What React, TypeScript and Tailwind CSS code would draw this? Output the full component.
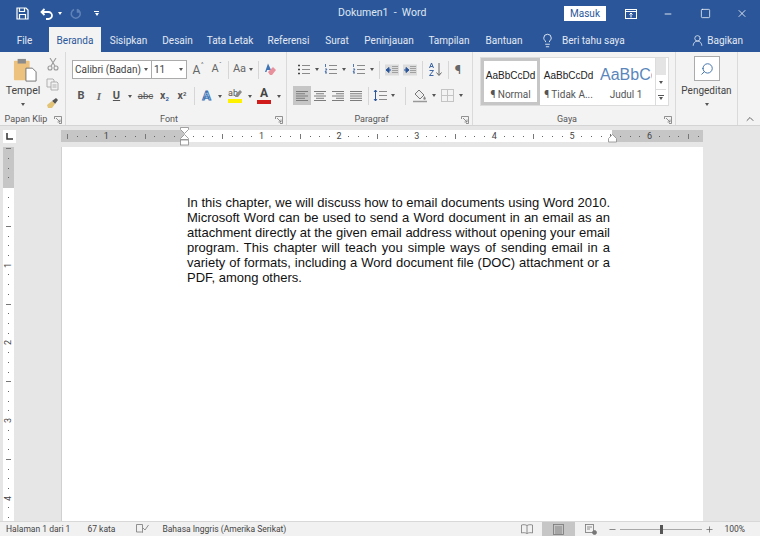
import type { ReactNode } from "react"
import { ChevronUp, Lightbulb, Minus, Plus, Search, Square, UserRound, X } from "lucide-react"

const tabs = [
  { label: "Sisipkan", w: "w-[53px]" },
  { label: "Desain", w: "w-[45px]" },
  { label: "Tata Letak", w: "w-[60px]" },
  { label: "Referensi", w: "w-[57px]" },
  { label: "Surat", w: "w-[40px]" },
  { label: "Peninjauan", w: "w-[64px]" },
  { label: "Tampilan", w: "w-[56px]" },
  { label: "Bantuan", w: "w-[54px]" },
]

function Caret({ className = "" }: { className?: string }) {
  return <span className={"inline-block w-0 h-0 border-x-[2.5px] border-x-transparent border-t-[3px] border-t-[#555] " + className} />
}

function Launcher() {
  return (
    <svg width="8" height="8" viewBox="0 0 8 8" fill="none" stroke="#777" strokeWidth="0.8">
      <path d="M0.5 3V0.5H7.5V7.5H5M2 2l4 4M6 3.5V6H3.5" />
    </svg>
  )
}

function Sep() {
  return <div className="w-px h-[18px] bg-[#d6d6d6]" />
}

function Lines({ widths, x = 1 }: { widths: number[]; x?: number }) {
  return (
    <svg width="14" height="12" viewBox="0 0 14 12" stroke="#7c7c7c" strokeWidth="1">
      {widths.map((w, i) => (
        <path key={i} d={"M" + (x === 1 ? 1 : x === 2 ? (14 - w) / 2 : 13 - w) + " " + (1.5 + i * 2.25) + "h" + w} />
      ))}
    </svg>
  )
}

function ListIcon({ num }: { num?: boolean }) {
  return (
    <svg width="13" height="13" viewBox="0 0 13 13" stroke="#8a8a8a" strokeWidth="1">
      <path d="M5 2.5h8M5 6.5h8M5 10.5h8" />
      {num ? (
        <path d="M1.5 1v3M1 6h2L1 9h2M1 10h2" stroke="#2b579a" strokeWidth="0.8" fill="none" />
      ) : (
        <path d="M1 2.5h2M1 6.5h2M1 10.5h2" stroke="#444" strokeWidth="1.6" />
      )}
    </svg>
  )
}

function Indent({ flip }: { flip?: boolean }) {
  return (
    <svg width="14" height="12" viewBox="0 0 14 12">
      <rect x="0" y="0.5" width="14" height="11" fill="#dcdcdc" />
      <path d="M7 2.5h6M7 4.5h6M7 6.5h6M7 8.5h6" stroke="#a0a0a0" />
      <path d={flip ? "M1 6h3M3 3.5l3 2.5-3 2.5z" : "M3 6h3M4 3.5L1 6l3 2.5z"} stroke="#2b579a" fill="#2b579a" />
    </svg>
  )
}

function GroupLabel({ label, className = "" }: { label: string; className?: string }) {
  return (
    <div className={"absolute left-0 right-0 bottom-0 h-[11px] flex items-center justify-center " + className}>
      <span className="text-[9px] leading-[11px] text-[#555] whitespace-nowrap">{label}</span>
      <span className="absolute right-[3px] top-[2px]">
        <Launcher />
      </span>
    </div>
  )
}

function Cell({ w, children, className = "" }: { w: string; children: ReactNode; className?: string }) {
  return <div className={"flex items-center justify-center shrink-0 " + w + " " + className}>{children}</div>
}

function PapanKlip() {
  return (
    <div className="relative w-[66px] h-full border-r border-[#dadada] shrink-0">
      <div className="flex pt-[5px]">
        <div className="w-[46px] flex flex-col items-center">
          <svg width="24" height="26" viewBox="0 0 26 26" className="ml-[4px]">
            <rect x="1" y="3" width="17" height="21" rx="1" fill="#edc27e" />
            <rect x="5" y="1" width="9" height="5" fill="#8c8c8c" />
            <path d="M14 11h7l4 4v10H14z" fill="#fff" stroke="#707070" />
          </svg>
          <span className="text-[10.5px] leading-[14px] text-[#444] mt-[1px]">Tempel</span>
          <Caret className="mt-[5px]" />
        </div>
        <div className="flex flex-col items-center gap-[7px] pt-[1px]">
          <svg width="12" height="13" viewBox="0 0 12 13" fill="none" stroke="#9a9a9a" strokeWidth="1.1">
            <path d="M3 0l5 8M9 0L4 8" />
            <circle cx="3" cy="10" r="2" />
            <circle cx="9" cy="10" r="2" />
          </svg>
          <svg width="13" height="13" viewBox="0 0 13 13" fill="#f2f2f2" stroke="#a8a8a8" strokeWidth="0.9">
            <path d="M1 1h6l1 1v7H1z" />
            <path d="M5 4h6l1 1v7H5z" />
            <path d="M6.5 7h4M6.5 9h4" />
          </svg>
          <svg width="13" height="11" viewBox="0 0 13 11">
            <path d="M6 3l4-3 2 2-3 4z" fill="#555" />
            <path d="M1 7l5-4 3 3-3 4H2z" fill="#e3c477" />
          </svg>
        </div>
      </div>
      <GroupLabel label="Papan Klip" className="pr-[13px]" />
    </div>
  )
}

function FontGroup() {
  return (
    <div className="relative w-[221px] h-full border-r border-[#dadada] shrink-0">
      <div className="flex items-center pt-[8px] pl-[6px] h-[27px]">
        <div className="w-[80px] h-[19px] bg-white border border-[#ababab] flex items-center justify-between pl-[2px] pr-[3px] shrink-0">
          <span className="text-[10px] text-[#444] whitespace-nowrap">Calibri (Badan)</span>
          <Caret />
        </div>
        <div className="w-[35px] h-[19px] bg-white border border-l-0 border-[#ababab] flex items-center justify-between pl-[2px] pr-[3px] shrink-0">
          <span className="text-[10px] text-[#444]">11</span>
          <Caret />
        </div>
        <Cell w="w-[19px]"><span className="text-[12px] text-[#666] relative">A<span className="absolute -top-[2px] -right-[3px] text-[6px]">^</span></span></Cell>
        <Cell w="w-[18px]"><span className="text-[11px] text-[#666] relative">A<span className="absolute -top-[2px] -right-[3px] text-[6px]">ˇ</span></span></Cell>
        <Cell w="w-[5px] ml-[2px]"><Sep /></Cell>
        <Cell w="w-[24px]"><span className="text-[11px] text-[#666]">Aa</span><Caret className="ml-[3px]" /></Cell>
        <Cell w="w-[5px] ml-[1px]"><Sep /></Cell>
        <Cell w="w-[16px]">
          <svg width="13" height="13" viewBox="0 0 13 13">
            <path d="M5 0.5L2 9h1.4l.7-2h2.6l.7 2H9z" fill="#3f74b5" />
            <path d="M5 9l5-5 3 3-4 5H7z" fill="#e8919d" />
          </svg>
        </Cell>
      </div>
      <div className="flex items-center pl-[6px] mt-[8px] h-[18px]">
        <Cell w="w-[18px]"><span className="font-bold text-[11px] text-[#555]">B</span></Cell>
        <Cell w="w-[18px]"><span className="italic font-bold text-[11px] text-[#666] font-['Liberation_Serif',serif]">I</span></Cell>
        <Cell w="w-[17px]"><span className="underline font-bold text-[11px] text-[#555]">U</span></Cell>
        <Cell w="w-[10px]"><Caret /></Cell>
        <Cell w="w-[21px]"><span className="line-through text-[9.5px] text-[#555]">abc</span></Cell>
        <Cell w="w-[17px]"><span className="text-[10.5px] font-bold text-[#555]">x<sub className="text-[6px] text-[#2b579a]">2</sub></span></Cell>
        <Cell w="w-[18px]"><span className="text-[10.5px] font-bold text-[#555]">x<sup className="text-[6px]">2</sup></span></Cell>
        <Cell w="w-[5px] ml-[1px]"><Sep /></Cell>
        <Cell w="w-[19px]"><span className="text-[13px] font-bold text-[#bcd3ec] [-webkit-text-stroke:0.8px_#3f74b5]">A</span></Cell>
        <Cell w="w-[7px]"><Caret /></Cell>
        <Cell w="w-[23px]">
          <div className="relative flex flex-col items-center">
            <span className="text-[9px] leading-[9px] text-[#555] -ml-[3px]">ab</span>
            <svg width="8" height="8" viewBox="0 0 8 8" className="absolute right-[0px] top-[1px]">
              <path d="M6 0l2 2-4 5H1l1-3z" fill="#8a8a8a" />
            </svg>
            <div className="w-[14px] h-[4px] bg-[#fff200] mt-[1px]" />
          </div>
        </Cell>
        <Cell w="w-[7px]"><Caret /></Cell>
        <Cell w="w-[22px]">
          <div className="flex flex-col items-center">
            <span className="text-[12px] leading-[11px] font-bold text-[#444]">A</span>
            <div className="w-[14px] h-[4px] bg-[#d11a1a] mt-[1px]" />
          </div>
        </Cell>
        <Cell w="w-[8px]"><Caret /></Cell>
      </div>
      <GroupLabel label="Font" className="pr-[14px]" />
    </div>
  )
}

function ParagrafGroup() {
  return (
    <div className="relative w-[186px] h-full border-r border-[#dadada] shrink-0">
      <div className="flex items-center pt-[8px] pl-[8px] h-[27px]">
        <Cell w="w-[16px]"><ListIcon /></Cell>
        <Cell w="w-[11px]"><Caret /></Cell>
        <Cell w="w-[16px]"><ListIcon num /></Cell>
        <Cell w="w-[11px]"><Caret /></Cell>
        <Cell w="w-[18px]"><ListIcon num /></Cell>
        <Cell w="w-[10px]"><Caret /></Cell>
        <Cell w="w-[5px]"><Sep /></Cell>
        <Cell w="w-[18px] ml-[1px]"><Indent /></Cell>
        <Cell w="w-[18px]"><Indent flip /></Cell>
        <Cell w="w-[6px]"><Sep /></Cell>
        <Cell w="w-[20px]">
          <svg width="15" height="15" viewBox="0 0 15 15" fill="none">
            <path d="M1.5 6l2-5 2 5M2.2 4.5h2.6M1.5 8.5h4l-4 5h4" stroke="#2b579a" strokeWidth="0.9" />
            <path d="M11 1v12M8.5 10.5L11 13.5l2.5-3" stroke="#666" strokeWidth="1" />
          </svg>
        </Cell>
        <Cell w="w-[6px]"><Sep /></Cell>
        <Cell w="w-[14px]"><span className="text-[13px] text-[#666]">¶</span></Cell>
      </div>
      <div className="flex items-center pl-[6px] mt-[7px] h-[19px]">
        <Cell w="w-[18px] h-[19px] bg-[#c6c6c6]"><Lines widths={[12, 9, 12, 9, 12]} /></Cell>
        <Cell w="w-[18px]"><Lines widths={[12, 8, 12, 8, 12]} x={2} /></Cell>
        <Cell w="w-[18px]"><Lines widths={[12, 8, 12, 8, 12]} x={3} /></Cell>
        <Cell w="w-[18px]"><Lines widths={[12, 12, 12, 12, 12]} /></Cell>
        <Cell w="w-[6px]"><Sep /></Cell>
        <Cell w="w-[18px]">
          <svg width="14" height="13" viewBox="0 0 14 13" fill="none">
            <path d="M2.5 1v11M1 3l1.5-2L4 3M1 10l1.5 2L4 10" stroke="#2b579a" />
            <path d="M6 2.5h8M6 6.5h8M6 10.5h8" stroke="#8a8a8a" />
          </svg>
        </Cell>
        <Cell w="w-[8px]"><Caret /></Cell>
        <Cell w="w-[16px]"><Sep /></Cell>
        <Cell w="w-[14px]">
          <svg width="14" height="14" viewBox="0 0 14 14">
            <path d="M6 1l5 5-4 4-5-5z" fill="#eee" stroke="#777" />
            <path d="M11.5 7c1 1.5 1.3 2 1.3 2.5a1.2 1.2 0 0 1-2.5 0c0-.5.3-1 1.2-2.5z" fill="#888" />
            <path d="M0 12.5h14" stroke="#999" strokeWidth="1.5" />
          </svg>
        </Cell>
        <Cell w="w-[13px]"><Caret /></Cell>
        <Cell w="w-[14px]">
          <svg width="13" height="13" viewBox="0 0 13 13" fill="none" stroke="#c4c4c4">
            <rect x="0.5" y="0.5" width="12" height="12" />
            <path d="M6.5 0.5v12M0.5 6.5h12" />
          </svg>
        </Cell>
        <Cell w="w-[13px]"><Caret /></Cell>
      </div>
      <GroupLabel label="Paragraf" className="pr-[16px]" />
    </div>
  )
}

function GayaGroup() {
  return (
    <div className="relative w-[203px] h-full border-r border-[#dadada] shrink-0">
      <div className="flex mt-[5px] ml-[7px] w-[189px] h-[49px] bg-white border border-[#dcdcdc]">
        <div className="w-[59px] h-full border-[3px] border-[#c6c6c6] flex flex-col items-center shrink-0 pt-[8px]">
          <span className="text-[10px] leading-[14px] text-[#222] font-['Liberation_Sans',sans-serif] whitespace-nowrap">AaBbCcDd</span>
          <span className="text-[10px] leading-[14px] text-[#555] mt-[5px] whitespace-nowrap">¶ Normal</span>
        </div>
        <div className="w-[57px] flex flex-col items-center shrink-0 pt-[11px]">
          <span className="text-[10px] leading-[14px] text-[#222] font-['Liberation_Sans',sans-serif] whitespace-nowrap">AaBbCcDd</span>
          <span className="text-[10px] leading-[14px] text-[#555] mt-[5px] whitespace-nowrap">¶ Tidak A...</span>
        </div>
        <div className="w-[58px] flex flex-col items-center shrink-0 pt-[7px] overflow-hidden">
          <span className="text-[16px] leading-[20px] text-[#5a86bb] w-[52px] overflow-hidden whitespace-nowrap font-['Liberation_Sans',sans-serif]">AaBbCcDd</span>
          <span className="text-[10px] leading-[14px] text-[#555] mt-[3px]">Judul 1</span>
        </div>
        <div className="w-[11px] flex flex-col border-l border-[#dcdcdc] shrink-0">
          <div className="h-[17px] bg-[#e4e4e4]" />
          <div className="h-[15px] flex items-center justify-center border-b border-[#dcdcdc]"><Caret /></div>
          <div className="flex-1 flex flex-col items-center justify-center gap-[1px]"><div className="w-[6px] h-px bg-[#555]" /><Caret /></div>
        </div>
      </div>
      <GroupLabel label="Gaya" className="pr-[14px]" />
    </div>
  )
}

function Pengeditan() {
  return (
    <div className="relative w-[62px] h-full border-r border-[#dadada] shrink-0 flex flex-col items-center pt-[4px]">
      <div className="w-[26px] h-[25px] bg-white border border-[#ababab] flex items-center justify-center">
        <Search size={14} color="#3a6ea8" strokeWidth={1.6} className="-scale-x-100" />
      </div>
      <span className="text-[10px] leading-[14px] text-[#444] mt-[3px]">Pengeditan</span>
      <Caret className="mt-[5px]" />
    </div>
  )
}

const hTicks = Array.from({ length: 66 }, (_, n) => n - 12)
const vTicks = Array.from({ length: 43 }, (_, n) => n - 4)

function HorizontalRuler() {
  return (
    <div className="relative ml-[61px] w-[642px] h-[12px] flex">
      <div className="w-[123px] bg-[#c6c6c6]" />
      <div className="w-[428px] bg-white" />
      <div className="flex-1 bg-[#c6c6c6]" />
      <div className="absolute inset-0 flex pl-[1.6px] overflow-hidden">
        {hTicks.map((i) => (
          <div key={i} className="w-[9.71px] shrink-0 flex items-center justify-center">
            {i === 0 ? null : i % 8 === 0 ? (
              <span className="text-[9px] leading-none text-[#444]">{Math.abs(i / 8)}</span>
            ) : i % 4 === 0 ? (
              <div className="w-px h-[5px] bg-[#777]" />
            ) : (
              <div className="w-px h-px bg-[#666]" />
            )}
          </div>
        ))}
      </div>
      <div className="absolute left-[118px] top-[-3px] w-[10px] flex flex-col items-center">
        <svg width="9" height="19" viewBox="0 0 9 19" fill="#fff" stroke="#8a8a8a" strokeWidth="0.8">
          <path d="M0.5 0.5h8v2L4.5 6.5l-4-4z" />
          <path d="M4.5 7.5l4 4v1H0.5v-1z" />
          <rect x="0.5" y="13" width="8" height="5" />
        </svg>
      </div>
      <div className="absolute left-[547px] top-[4px]">
        <svg width="9" height="9" viewBox="0 0 9 9" fill="#fff" stroke="#8a8a8a" strokeWidth="0.8">
          <path d="M4.5 0.5l4 4v3.5H0.5V4.5z" />
        </svg>
      </div>
    </div>
  )
}

function VerticalRuler() {
  return (
    <div className="relative w-[11px] ml-[3px] h-full bg-white overflow-hidden shrink-0">
      <div className="absolute left-0 right-0 top-0 h-[41px] bg-[#c6c6c6]" />
      <div className="relative flex flex-col -mt-[3px]">
        {vTicks.map((i) => (
          <div key={i} className="h-[9.71px] shrink-0 flex items-center justify-center">
            {i === 0 ? null : i % 8 === 0 ? (
              <span className="text-[9px] leading-none text-[#444] -rotate-90">{Math.abs(i / 8)}</span>
            ) : i % 4 === 0 ? (
              <div className="w-[5px] h-px bg-[#777]" />
            ) : (
              <div className="w-px h-px bg-[#666]" />
            )}
          </div>
        ))}
      </div>
    </div>
  )
}

export default function App() {
  return (
    <div className="w-[760px] h-[536px] overflow-hidden flex flex-col bg-[#e6e6e6] font-['Roboto','Noto_Sans',sans-serif]">
      {/* title bar */}
      <div className="h-[27px] bg-[#2b579a] flex items-center text-white shrink-0 relative">
        <div className="flex items-center pl-[16px]">
          <svg width="13" height="13" viewBox="0 0 13 13" fill="none" stroke="#fff" strokeWidth="1.2">
            <path d="M1 1h9l2 2v9H1z" />
            <path d="M3.5 1v3.5h5V1M3.5 12V7.5h6V12" />
          </svg>
          <svg width="14" height="12" viewBox="0 0 14 12" fill="none" stroke="#fff" strokeWidth="1.8" className="ml-[11px]">
            <path d="M4.5 1L1.5 4l3 3M2 4h6.5a3.3 3.3 0 0 1 0 7H6" />
          </svg>
          <Caret className="ml-[4px] !border-t-white" />
          <svg width="12" height="12" viewBox="0 0 12 12" fill="none" stroke="#5f83b8" strokeWidth="1.5" className="ml-[8px]">
            <path d="M7.5 1.5a4.5 4.5 0 1 1-3.5 0M7.5 1v3h3" />
          </svg>
          <div className="ml-[12px] flex flex-col items-center gap-[1px]">
            <div className="w-[5px] h-px bg-white" />
            <Caret className="!border-t-white" />
          </div>
        </div>
        <span className="absolute left-[338px] top-[5px] text-[10.5px] leading-[16px] text-[#dfe6f1] whitespace-pre">Dokumen1  -  Word</span>
        <div className="ml-auto flex items-center">
          <div className="w-[42px] h-[15px] bg-white text-[#2b579a] text-[10px] leading-[15px] text-center">Masuk</div>
          <Cell w="w-[18px] ml-[16px]">
            <svg width="12" height="10" viewBox="0 0 12 10" fill="none" stroke="#fff">
              <rect x="0.5" y="0.5" width="11" height="9" />
              <path d="M0.5 2.5h11M6 8.5V4M4.5 5.5L6 4l1.5 1.5" />
            </svg>
          </Cell>
          <Cell w="w-[10px] ml-[23px]"><Minus size={12} color="#fff" /></Cell>
          <Cell w="w-[12px] ml-[26px]"><Square size={11} color="#fff" strokeWidth={1.6} /></Cell>
          <Cell w="w-[12px] ml-[25px] mr-[12px]"><X size={13} color="#fff" strokeWidth={1.6} /></Cell>
        </div>
      </div>
      {/* tabs */}
      <div className="h-[25px] bg-[#2b579a] flex items-end text-[10px] text-[#e4e9f3] shrink-0">
        <div className="w-[49px] h-full flex items-center justify-center pt-[1px]">File</div>
        <div className="w-[52px] h-full bg-[#f3f3f3] text-[#2b579a] flex items-center justify-center pt-[1px]">Beranda</div>
        <div className="flex h-full pt-[1px] pl-[1px]">
          {tabs.map((t) => (
            <div key={t.label} className={"h-full flex items-center justify-center whitespace-nowrap " + t.w}>{t.label}</div>
          ))}
        </div>
        <div className="h-full flex items-center ml-[9px] pt-[1px]">
          <Lightbulb size={15} color="#fff" strokeWidth={1.3} />
          <span className="ml-[7px] whitespace-nowrap">Beri tahu saya</span>
        </div>
        <div className="ml-auto h-full flex items-center mr-[17px] pt-[1px]">
          <UserRound size={13} color="#fff" strokeWidth={1.3} />
          <span className="ml-[3px]">Bagikan</span>
        </div>
      </div>
      {/* ribbon */}
      <div className="h-[74px] bg-[#f3f3f3] border-b border-[#d4d4d4] flex shrink-0 relative">
        <PapanKlip />
        <FontGroup />
        <ParagrafGroup />
        <GayaGroup />
        <Pengeditan />
        <ChevronUp size={12} color="#666" className="absolute right-[4px] bottom-[0px]" />
      </div>
      {/* ruler row */}
      <div className="h-[21px] flex items-start pt-[4px] shrink-0 relative">
        <div className="absolute left-[3px] top-[4px] w-[13px] h-[13px] bg-white flex items-center justify-center">
          <svg width="7" height="7" viewBox="0 0 7 7" fill="none" stroke="#333" strokeWidth="1.5">
            <path d="M1 0v6h6" />
          </svg>
        </div>
        <HorizontalRuler />
      </div>
      {/* document */}
      <div className="flex-1 min-h-0 flex">
        <VerticalRuler />
        <div className="ml-[47px] w-[642px] h-full bg-white border-l border-[#d0d0d0] pl-[125px] pr-[93px] pt-[48px] font-['Liberation_Sans',sans-serif]">
          <p className="text-[13px] leading-[15px] text-justify text-[#111]">
            In this chapter, we will discuss how to email documents using Word 2010. Microsoft Word can be used to send a Word document in an email as an attachment directly at the given email address without opening your email program. This chapter will teach you simple ways of sending email in a variety of formats, including a Word document file (DOC) attachment or a PDF, among others.
          </p>
        </div>
      </div>
      {/* status bar */}
      <div className="h-[14px] bg-[#f1f1f1] border-t border-[#d8d8d8] flex items-center text-[8.5px] text-[#444] shrink-0 box-content">
        <span className="ml-[6px] whitespace-nowrap">Halaman 1 dari 1</span>
        <span className="ml-[17px] whitespace-nowrap">67 kata</span>
        <svg width="13" height="10" viewBox="0 0 13 10" fill="none" stroke="#777" strokeWidth="0.8" className="ml-[21px]">
          <path d="M0.5 0.5h6v8l-1-.5h-5zM7 4l2 2 3.5-5" />
        </svg>
        <span className="ml-[13px] whitespace-nowrap">Bahasa Inggris (Amerika Serikat)</span>
        <div className="ml-auto flex items-center h-full">
          <svg width="12" height="10" viewBox="0 0 12 10" fill="none" stroke="#777" strokeWidth="0.8">
            <path d="M6 1.5C4.5.5 2 .5.5 1v8C2 8.5 4.5 8.5 6 9.5c1.5-1 4-1 5.500-.5V1C10 .5 7.5.5 6 1.5zM6 1.5v8" />
          </svg>
          <div className="w-[33px] h-full bg-[#c6c6c6] ml-[9px] flex items-center justify-center">
            <svg width="11" height="11" viewBox="0 0 11 11" fill="none" stroke="#777" strokeWidth="0.8">
              <rect x="0.5" y="0.5" width="10" height="10" />
              <path d="M2 3h7M2 5h7M2 7h7M2 9h7" />
            </svg>
          </div>
          <svg width="12" height="11" viewBox="0 0 12 11" fill="none" stroke="#777" strokeWidth="0.8" className="ml-[10px]">
            <rect x="0.5" y="0.5" width="8" height="8" />
            <path d="M2 3h5M2 5h3" />
            <circle cx="9.5" cy="8.5" r="2" fill="#777" />
          </svg>
          <Minus size={9} color="#666" className="ml-[11px]" />
          <div className="relative w-[82px] h-px bg-[#a8a8a8] ml-[3px]">
            <div className="absolute left-[40px] -top-[4px] w-[3px] h-[9px] bg-[#555]" />
          </div>
          <Plus size={9} color="#666" className="ml-[3px]" />
          <span className="ml-[10px] mr-[15px]">100%</span>
        </div>
      </div>
    </div>
  )
}
